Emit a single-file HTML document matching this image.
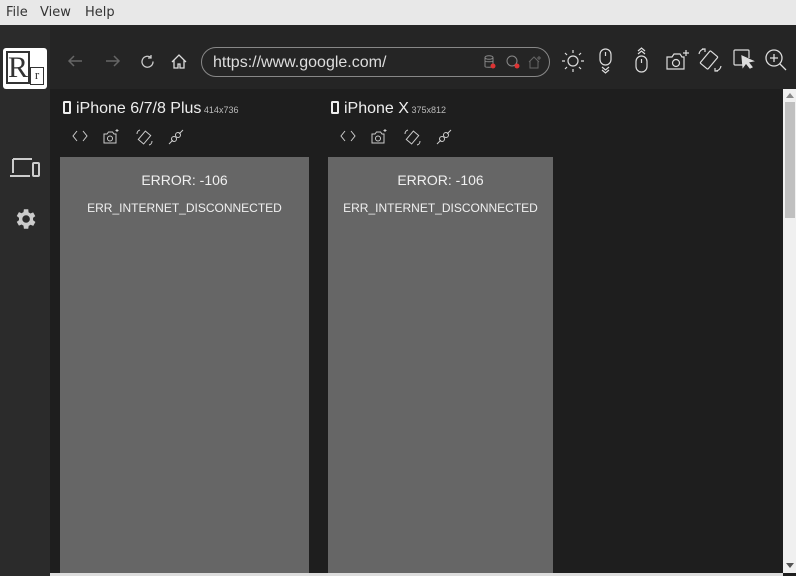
<!DOCTYPE html>
<html><head><meta charset="utf-8"><style>
*{margin:0;padding:0;box-sizing:border-box}
body{width:796px;height:576px;overflow:hidden;background:#1e1e1e;font-family:"Liberation Sans",sans-serif;position:relative}
.menu{position:absolute;left:0;top:0;width:796px;height:25px;background:#e8e8e8;font-family:"DejaVu Sans",sans-serif;font-size:13px;color:#333}
.menu span{position:absolute;top:5px}
.side{position:absolute;left:0;top:25px;width:50px;height:551px;background:#2b2b2b}
.tool{position:absolute;left:50px;top:25px;width:746px;height:64px;background:#252525}
.logo{position:absolute;left:3px;top:23px;width:44px;height:41px;background:#fff;border-radius:3px}
.url{position:absolute;left:151px;top:22px;width:349px;height:30px;border:1px solid #888;border-radius:15px;color:#ddd;font-size:16px;padding:6px 0 0 11px}
svg{position:absolute;overflow:visible}
.dev{position:absolute;color:#eee;font-size:16px}
.dev small{font-size:9px;color:#bbb}
.frame{position:absolute;top:157px;height:416px;background:#666;color:#f0f0f0;text-align:center}
.frame .e1{margin-top:15px;font-size:14px}
.frame .e2{margin-top:13px;font-size:12px}
.vs{position:absolute;left:783px;top:89px;width:13px;height:484px;background:#f0f0f0}
.hs{position:absolute;left:50px;top:573px;width:733px;height:3px;background:#ddd}
</style></head><body>
<div class="menu"><span style="left:6px">File</span><span style="left:40px">View</span><span style="left:85px">Help</span></div>
<div class="side">
<div class="logo">
<div style="position:absolute;left:3px;top:3px;width:24px;height:33px;border:2px solid #333;font-family:'Liberation Serif',serif;font-size:30px;line-height:30px;color:#333;text-align:center">R</div>
<div style="position:absolute;left:27px;top:19px;width:14px;height:18px;border:1.5px solid #333;font-family:'Liberation Serif',serif;font-size:13px;line-height:14px;color:#333;text-align:center">r</div>
</div>
<svg style="left:10px;top:132px" width="30" height="22" viewBox="0 0 30 22" fill="none" stroke="#ccc" stroke-width="2"><path d="M3 2h19M3 2v14M0 19h20"/><rect x="23" y="6" width="6" height="13" rx="1"/></svg>
<svg style="left:12px;top:181px" width="26" height="26" viewBox="0 0 24 24" fill="#ccc"><path d="M19.4 13a7.5 7.5 0 000-2l2.1-1.6-2-3.5-2.5 1a7 7 0 00-1.7-1L15 3h-4l-.4 2.7a7 7 0 00-1.7 1l-2.5-1-2 3.5L6.5 11a7.5 7.5 0 000 2l-2.1 1.6 2 3.5 2.5-1a7 7 0 001.7 1L11 21h4l.4-2.7a7 7 0 001.7-1l2.5 1 2-3.5zM13 15.5a3.5 3.5 0 110-7 3.5 3.5 0 010 7z"/></svg>
</div>
<div class="tool">
<svg style="left:18px;top:30px" width="14" height="12" fill="none" stroke="#666" stroke-width="1.5"><path d="M14 6H1M6 1L1 6l5 5"/></svg>
<svg style="left:56px;top:30px" width="14" height="12" fill="none" stroke="#666" stroke-width="1.5"><path d="M0 6h13M8 1l5 5-5 5"/></svg>
<svg style="left:90px;top:29px" width="15" height="15" fill="none" stroke="#ccc" stroke-width="1.3"><path d="M13 7.5A5.5 5.5 0 1111 3.5M11 1v3h-3"/></svg>
<svg style="left:121px;top:29px" width="16" height="15" fill="none" stroke="#ddd" stroke-width="1.3"><path d="M1 8L8 1l7 7M3 6v8h4v-4h2v4h4V6"/></svg>
<div class="url">https://www.google.com/</div>
<svg style="left:434px;top:30px" width="12" height="14" fill="none" stroke="#888"><ellipse cx="5" cy="2.5" rx="4" ry="1.8"/><path d="M1 2.5v9c0 1 8 1 8 0v-9M1 6c0 1 8 1 8 0"/><circle cx="9" cy="11" r="2.5" fill="#d33" stroke="none"/></svg>
<svg style="left:456px;top:30px" width="14" height="14" fill="none" stroke="#888"><circle cx="6" cy="6" r="5"/><circle cx="11" cy="11" r="2.5" fill="#d33" stroke="none"/></svg>
<svg style="left:478px;top:30px" width="14" height="14" fill="none" stroke="#666"><path d="M1 7l5-5 5 5M2 6v7h8V6M11 1v4M9 3h4"/></svg>
<svg style="left:512px;top:25px" width="22" height="22" fill="none" stroke="#ddd" stroke-width="1.2"><circle cx="11" cy="11" r="5"/><path d="M11 0v3M11 19v3M0 11h3M19 11h3M3 3l2 2M17 17l2 2M3 19l2-2M17 5l2-2"/></svg>
<svg style="left:549px;top:23px" width="14" height="26" fill="none" stroke="#ddd" stroke-width="1.2"><rect x="1" y="1" width="11" height="16" rx="5.5"/><path d="M6.5 4v4M3 19l3.5 3 3.5-3M3 22l3.5 3 3.5-3"/></svg>
<svg style="left:585px;top:22px" width="14" height="26" fill="none" stroke="#ddd" stroke-width="1.2"><path d="M3 4l3.5-3 3.5 3M3 7l3.5-3 3.5 3"/><rect x="1" y="9" width="11" height="16" rx="5.5"/><path d="M6.5 12v4"/></svg>
<svg style="left:616px;top:24px" width="24" height="22" fill="none" stroke="#ddd" stroke-width="1.2"><path d="M1 8h5l2-3h6l2 3h2v12H1z"/><circle cx="10" cy="14" r="3.5"/><path d="M20 1v6M17 4h6"/></svg>
<svg style="left:648px;top:23px" width="24" height="24" fill="none" stroke="#ddd" stroke-width="1.2"><rect x="6" y="4" width="10" height="16" rx="1" transform="rotate(40 11 12)"/><path d="M1 6a6 6 0 015-5M4 1h3v3M23 18a6 6 0 01-5 5M20 23h-3v-3"/></svg>
<svg style="left:683px;top:24px" width="22" height="22" fill="none" stroke="#ddd" stroke-width="1.2"><path d="M10 16H2a1 1 0 01-1-1V2a1 1 0 011-1h13a1 1 0 011 1v7"/><path d="M9 7l11 5-5 1 4 5-2 1-4-5-3 4z" fill="#ddd"/></svg>
<svg style="left:715px;top:24px" width="22" height="22" fill="none" stroke="#ddd" stroke-width="1.3"><circle cx="9" cy="9" r="8"/><path d="M15 15l6 6M9 5v8M5 9h8"/></svg>
</div>
<svg style="left:63px;top:101px" width="8" height="13" fill="#eee" stroke="none"><rect x="0" y="0" width="8" height="13" rx="1.5"/><rect x="2" y="2" width="4" height="9" fill="#1e1e1e"/></svg>
<div class="dev" style="left:76px;top:100px">iPhone 6/7/8 Plus<small> 414x736</small></div>
<svg style="left:331px;top:101px" width="8" height="13" fill="#eee" stroke="none"><rect x="0" y="0" width="8" height="13" rx="1.5"/><rect x="2" y="2" width="4" height="9" fill="#1e1e1e"/></svg>
<div class="dev" style="left:344px;top:100px">iPhone X<small> 375x812</small></div>
<svg style="left:72px;top:130px" width="16" height="12" fill="none" stroke="#ccc"><path d="M5 1L1 6l4 5M11 1l4 5-4 5"/></svg>
<svg style="left:103px;top:129px" width="16" height="15" fill="none" stroke="#ccc"><path d="M1 5h3l1.5-2h4L11 5h2v9H1z"/><circle cx="7" cy="9.5" r="2.5"/><path d="M14 0v3M12.5 1.5h3"/></svg>
<svg style="left:136px;top:129px" width="17" height="17" fill="none" stroke="#ccc"><rect x="5" y="3" width="7" height="11" transform="rotate(40 8.5 8.5)"/><path d="M1 5a4 4 0 013-4M16 12a4 4 0 01-3 4"/></svg>
<svg style="left:168px;top:129px" width="16" height="16" fill="none" stroke="#ccc"><path d="M1 15l4-4M11 5l4-4"/><circle cx="6" cy="10" r="2.5"/><circle cx="10" cy="6" r="2.5"/></svg>
<svg style="left:340px;top:130px" width="16" height="12" fill="none" stroke="#ccc"><path d="M5 1L1 6l4 5M11 1l4 5-4 5"/></svg>
<svg style="left:371px;top:129px" width="16" height="15" fill="none" stroke="#ccc"><path d="M1 5h3l1.5-2h4L11 5h2v9H1z"/><circle cx="7" cy="9.5" r="2.5"/><path d="M14 0v3M12.5 1.5h3"/></svg>
<svg style="left:404px;top:129px" width="17" height="17" fill="none" stroke="#ccc"><rect x="5" y="3" width="7" height="11" transform="rotate(40 8.5 8.5)"/><path d="M1 5a4 4 0 013-4M16 12a4 4 0 01-3 4"/></svg>
<svg style="left:436px;top:129px" width="16" height="16" fill="none" stroke="#ccc"><path d="M1 15l4-4M11 5l4-4"/><circle cx="6" cy="10" r="2.5"/><circle cx="10" cy="6" r="2.5"/></svg>
<div class="frame" style="left:60px;width:249px"><div class="e1">ERROR: -106</div><div class="e2">ERR_INTERNET_DISCONNECTED</div></div>
<div class="frame" style="left:328px;width:225px"><div class="e1">ERROR: -106</div><div class="e2">ERR_INTERNET_DISCONNECTED</div></div>
<div class="vs"><div style="position:absolute;left:2px;top:13px;width:10px;height:116px;background:#c0c0c0"></div>
<div style="position:absolute;left:3px;top:4px;border:4px solid transparent;border-bottom:5px solid #888;border-top:0"></div>
<div style="position:absolute;left:3px;top:474px;border:4px solid transparent;border-top:5px solid #555;border-bottom:0"></div></div>
<div class="hs"></div>
</body></html>
